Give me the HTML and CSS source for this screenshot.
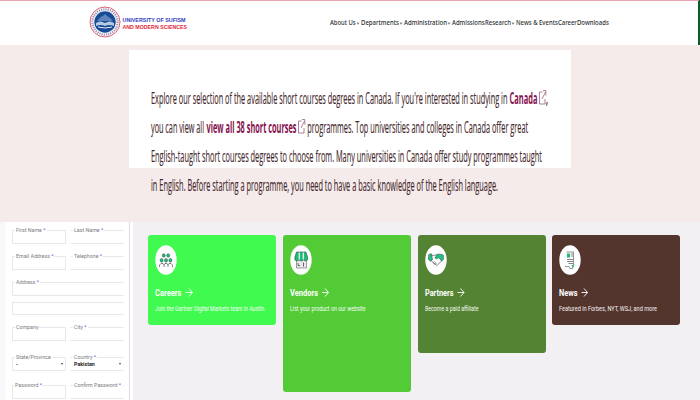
FILE: index.html
```html
<!DOCTYPE html>
<html lang="en">
<head>
<meta charset="utf-8">
<title>University of Sufism and Modern Sciences</title>
<link rel="stylesheet" href="styles.css">
</head>
<body>
<header class="header">
  <div class="brand">
    <svg class="seal" viewBox="0 0 32 32">
      <circle cx="16" cy="16" r="15" fill="#fff" stroke="#d9606c" stroke-width="1"/>
      <circle cx="16" cy="16" r="12.6" fill="none" stroke="#9b8eb4" stroke-width="2.2" stroke-dasharray="1.2 1"/>
      <circle cx="16" cy="16" r="10.7" fill="#174b98"/>
      <path d="M8 15q4-5 6-5l2-2 2 2q3 1 6 5z" fill="#5f84b9"/>
      <path d="M7 17q4-3 9 0 5-3 9 0v3q-5-2-9 0-4-2-9 0z" fill="#b7cbe2"/>
      <path d="M9 21q7 2 14 0" fill="none" stroke="#e9eff7" stroke-width="1"/>
    </svg>
    <svg class="wordmark" width="66" height="16">
      <text class="blue" x="0.5" y="6.6" textLength="63" lengthAdjust="spacingAndGlyphs">UNIVERSITY OF SUFISM</text>
      <text class="red" x="0.5" y="13.5" textLength="64.5" lengthAdjust="spacingAndGlyphs">AND MODERN SCIENCES</text>
    </svg>
  </div>
  <nav class="nav">
    <a class="w1"><svg width="26" height="10"><text y="7" textLength="25.7" lengthAdjust="spacingAndGlyphs">About Us</text></svg><i></i></a>
    <a class="w2"><svg width="38" height="10"><text y="7" textLength="38" lengthAdjust="spacingAndGlyphs">Departments</text></svg><i></i></a>
    <a class="w3"><svg width="43" height="10"><text y="7" textLength="43" lengthAdjust="spacingAndGlyphs">Administration</text></svg><i></i></a>
    <a class="w4"><svg width="33" height="10"><text y="7" textLength="32.6" lengthAdjust="spacingAndGlyphs">Admissions</text></svg></a>
    <a class="w5"><svg width="26" height="10"><text y="7" textLength="26" lengthAdjust="spacingAndGlyphs">Research</text></svg><i></i></a>
    <a class="w6"><svg width="42" height="10"><text y="7" textLength="41.8" lengthAdjust="spacingAndGlyphs">News &amp; Events</text></svg></a>
    <a class="w7"><svg width="19" height="10"><text y="7" textLength="18.8" lengthAdjust="spacingAndGlyphs">Career</text></svg></a>
    <a class="w8"><svg width="33" height="10"><text y="7" textLength="31.8" lengthAdjust="spacingAndGlyphs">Downloads</text></svg></a>
  </nav>
</header>

<section class="hero">
  <div class="sheet">
    <svg class="line" width="400" height="29">
      <text x="0" y="20" textLength="356.5" lengthAdjust="spacingAndGlyphs">Explore our selection of the available short courses degrees in Canada. If you're interested in studying in</text>
      <text class="link" x="358.5" y="20" textLength="28" lengthAdjust="spacingAndGlyphs">Canada</text>
      <path class="ext" d="M391.5 8h-3v12h5.500v-5M391 15l3.500-7M392 6.500h2.800v5"/>
      <text x="394.800" y="20" textLength="2.500" lengthAdjust="spacingAndGlyphs">,</text>
    </svg>
    <svg class="line" width="400" height="29">
      <text x="0" y="20" textLength="53" lengthAdjust="spacingAndGlyphs">you can view all</text>
      <text class="link" x="55.5" y="20" textLength="90" lengthAdjust="spacingAndGlyphs">view all 38 short courses</text>
      <path class="ext" d="M150.500 8h-3v12h5.500v-5M150 15l3.500-7M151 6.500h2.800v5"/>
      <text x="156.200" y="20" textLength="221" lengthAdjust="spacingAndGlyphs">programmes. Top universities and colleges in Canada offer great</text>
    </svg>
    <svg class="line" width="400" height="29">
      <text x="0" y="20" textLength="391" lengthAdjust="spacingAndGlyphs">English-taught short courses degrees to choose from. Many universities in Canada offer study programmes taught</text>
    </svg>
    <svg class="line" width="400" height="29">
      <text x="0" y="20" textLength="347" lengthAdjust="spacingAndGlyphs">in English. Before starting a programme, you need to have a basic knowledge of the English language.</text>
    </svg>
  </div>
</section>

<main class="main">
  <form class="form">
    <div class="field"><label>First Name <b>*</b></label></div>
    <div class="field open"><label>Last Name <b>*</b></label></div>
    <div class="field"><label>Email Address <b>*</b></label></div>
    <div class="field open"><label>Telephone <b>*</b></label></div>
    <div class="field wide"><label>Address <b>*</b></label></div>
    <div class="field wide"></div>
    <div class="field"><label>Company</label></div>
    <div class="field open"><label>City <b>*</b></label></div>
    <div class="field"><label>State/Province</label><div class="value"><span>-</span><u></u></div></div>
    <div class="field open"><label>Country <b>*</b></label><div class="value"><span>Pakistan</span><u></u></div></div>
    <div class="field pass"><label>Password <b>*</b></label></div>
    <div class="field open"><label>Confirm Password <b>*</b></label></div>
  </form>

  <section class="cards">
    <article class="card careers">
      <svg class="icon" viewBox="0 0 22 30">
        <ellipse cx="11" cy="15" rx="10.700" ry="14.800" fill="#fff"/>
        <g fill="#20ba79" stroke="#34534a" stroke-width=".5"><ellipse cx="8.800" cy="10.500" rx="1.500" ry="1.800"/><ellipse cx="13.200" cy="10.500" rx="1.500" ry="1.800"/><ellipse cx="6.600" cy="15.300" rx="1.500" ry="1.900"/><ellipse cx="11" cy="15.300" rx="1.500" ry="1.900"/><ellipse cx="15.400" cy="15.300" rx="1.500" ry="1.900"/></g>
        <path d="M4.500 22v-2l1.500-1.500h2l1 1.500v2m0-2 1-1.500h2l1 1.500v2m0-2 1-1.500h2l1.500 1.500v2" fill="none" stroke="#555" stroke-width=".7"/>
      </svg>
      <h3><svg width="45" height="14"><text y="10.500" textLength="26.500" lengthAdjust="spacingAndGlyphs">Careers</text><path d="M30.500 7.500h7M34 3.500l3.500 4L34 11.500"/></svg></h3>
      <svg class="desc" width="116" height="12"><text y="8.500" textLength="110.500" lengthAdjust="spacingAndGlyphs">Join the Gartner Digital Markets team in Austin.</text></svg>
    </article>
    <article class="card vendors">
      <svg class="icon" viewBox="0 0 22 30">
        <ellipse cx="11" cy="15" rx="10.700" ry="14.800" fill="#fff"/>
        <path d="M6.500 14v9h10v-9" fill="#e9e9e9" stroke="#777" stroke-width=".7"/>
        <path d="M6.500 7h9.500l1.500 5v3l-2 1-2-1-2.300 1-2.300-1-2 1-2-1v-3z" fill="#20ba79" stroke="#34534a" stroke-width=".6"/>
        <path d="M9.300 7.500v7M13.300 7.500v7" stroke="#e2f8ee" stroke-width="1.300"/>
        <path d="M8 18v2.500h2M13.500 17.500v4" fill="none" stroke="#444" stroke-width=".8"/>
      </svg>
      <h3><svg width="45" height="14"><text y="10.500" textLength="28" lengthAdjust="spacingAndGlyphs">Vendors</text><path d="M32 7.500h6.500M35 3.500l3.500 4L35 11.500"/></svg></h3>
      <svg class="desc" width="116" height="12"><text y="8.500" textLength="75.500" lengthAdjust="spacingAndGlyphs">List your product on our website</text></svg>
    </article>
    <article class="card partners">
      <svg class="icon" viewBox="0 0 22 30">
        <ellipse cx="11" cy="15" rx="10.700" ry="14.800" fill="#fff"/>
        <path d="M6.500 10.500 11 10l4.500.8 1 5.200-4.500 4.500L6.500 16z" fill="#fff" stroke="#555" stroke-width=".7"/>
        <path d="M3.800 9.500l2.500-.8 1.200 5.800-2 1.800-2-1.800zM18.200 10l-2.500-.8h-3.500L10 13l1.800 1 1.500-1.500 3.500 3.500 1.800-2z" fill="#20c585" stroke="#34534a" stroke-width=".6"/>
        <path d="M8 17.500l2 2.500M9.500 16.500l2 2.500" stroke="#555" stroke-width=".6"/>
      </svg>
      <h3><svg width="45" height="14"><text y="10.500" textLength="28.500" lengthAdjust="spacingAndGlyphs">Partners</text><path d="M32.500 7.500h6.500M35.500 3.500l3.500 4L35.500 11.500"/></svg></h3>
      <svg class="desc" width="116" height="12"><text y="8.500" textLength="53.500" lengthAdjust="spacingAndGlyphs">Become a paid affiliate</text></svg>
    </article>
    <article class="card news">
      <svg class="icon" viewBox="0 0 22 30">
        <ellipse cx="11" cy="15" rx="10.700" ry="14.800" fill="#fff"/>
        <path d="M7.500 7h7v12.500M6 21.500h4l1 2h2.500l1.500-4" fill="none" stroke="#666" stroke-width=".7"/>
        <path d="M8 8.500h3v4H8zM12.500 20.500l2.700-1.500-1.500 4z" fill="#20ba79"/>
        <path d="M11.800 9h2.200M11.800 11h2.200M8 14.500h6M8 16.500h6M9.500 18.500h4.500" stroke="#555" stroke-width=".7"/>
      </svg>
      <h3><svg width="45" height="14"><text y="10.500" textLength="18.500" lengthAdjust="spacingAndGlyphs">News</text><path d="M22.500 7.500h6M25 3.500l3.500 4L25 11.500"/></svg></h3>
      <svg class="desc" width="116" height="12"><text y="8.500" textLength="98" lengthAdjust="spacingAndGlyphs">Featured in Forbes, NYT, WSJ, and more</text></svg>
    </article>
  </section>
</main>
</body>
</html>
```
FILE: styles.css
```css
* { box-sizing: border-box; }
body {
  margin: 0;
  width: 700px;
  height: 400px;
  overflow: hidden;
  background: #f2f0f2;
  font-family: Roboto, "Liberation Sans", sans-serif;
}
svg { display: block; flex: none; overflow: visible; }

.header {
  display: flex;
  height: 44.500px;
  padding-left: 89px;
  background: #fff;
  border-top: 1px solid #e9a4b2;
  border-right: 2px solid #0c5a24;
}
.brand { display: flex; width: 240.5px; padding-top: 5px; }
.seal { width: 32px; height: 32px; }
.wordmark { margin: 9px 0 0 1px; font: bold 5.8px "Liberation Sans", sans-serif; }
.blue { fill: #2f3cc0; }
.red { fill: #e5283a; }
.nav { display: flex; padding-top: 17px; font: 500 6.2px "Noto Sans", sans-serif; }
.nav text { fill: #2c3135; }
.nav a { display: flex; }
.nav i {
  width: 2px;
  height: 2px;
  margin: 3.500px 0 0 1.5px;
  border: solid #888;
  border-width: 0 .7px .7px 0;
  transform: rotate(45deg);
}
.w1 { width: 31.2px; }
.w2 { width: 43.3px; }
.w3 { width: 48px; }
.w4 { width: 33px; }
.w5 { width: 31.3px; }
.w6 { width: 42px; }
.w7 { width: 19px; }

.hero { height: 177.500px; padding: 5.500px 0 0 129px; background: #f5ebea; }
.sheet {
  width: 442px;
  height: 118px;
  padding: 34px 0 0 22px;
  background: #fff;
  font: 15.800px "Open Sans", sans-serif;
}
.line { height: 28.9px; }
.line text { fill: #46292d; stroke: #46292d; stroke-width: .15px; }
.line .link { fill: #86124f; stroke: none; font-weight: 700; }
.ext { fill: none; stroke: #9b5f82; stroke-width: .8; }

.main { display: flex; height: 178px; }
.form {
  display: grid;
  grid-template-columns: 53.500px 53.500px;
  grid-template-rows: 14px 14px 14px 13px 14px 14px 14px;
  row-gap: 12px;
  column-gap: 4.500px;
  align-content: start;
  width: 133px;
  height: 178px;
  padding: 7.500px 0 0 12px;
  background: linear-gradient(90deg, #f8f8fa 5px, #fff 6px, #fff 129px, #dcdce2 129px, #dcdce2 130px, #fff 130px);
}
.field { border: 1px solid #e8e8eb; font-size: 5.3px; line-height: 6px; color: #7c7c84; }
.open { border-left-color: transparent; border-right-color: transparent; }
.wide { grid-column: 1 / 3; border-right-color: transparent; }
.wide + .wide { margin-top: -6px; height: 13.500px; }
.wide + .wide ~ .field { margin-top: -5.500px; height: 14px; }
.wide + .wide ~ .field:nth-of-type(n+9) { margin-top: -1.500px; }
.wide + .wide ~ .field:nth-of-type(n+11) { margin-top: .800px; }
.field label {
  display: block;
  width: max-content;
  margin: -4px 0 0 2px;
  padding: 0 1px;
  background: #fff;
  white-space: nowrap;
}
.pass label { margin-left: 1px; }
.field b { color: #5960e0; font-weight: 400; }
.value {
  display: flex;
  justify-content: space-between;
  align-items: center;
  height: 8px;
  padding: 0 2px 0 3px;
  color: #222;
  font-weight: 700;
}
.value u { border: solid transparent; border-width: 2px 1.200px 0; border-top-color: #444; }

.cards {
  display: grid;
  grid-template-columns: repeat(4, 128px);
  column-gap: 6.800px;
  align-items: start;
  padding: 13px 0 0 15px;
}
.card { height: 89.500px; padding: 9.500px 0 0 7px; border-radius: 3px; }
.careers { background: #41fa50; }
.vendors { height: 157px; background: #53cb36; }
.partners { height: 118px; background: #548433; }
.news { background: #53352e; }
.icon { width: 22px; height: 30px; }
.card h3 { margin: 10.300px 0 0; font: 700 9.300px Roboto, sans-serif; }
.card text { fill: #fff; }
.card h3 path { fill: none; stroke: #fff; stroke-width: .9; }
.desc { margin-top: 3px; font: 7px Roboto, sans-serif; opacity: .95; }
```
